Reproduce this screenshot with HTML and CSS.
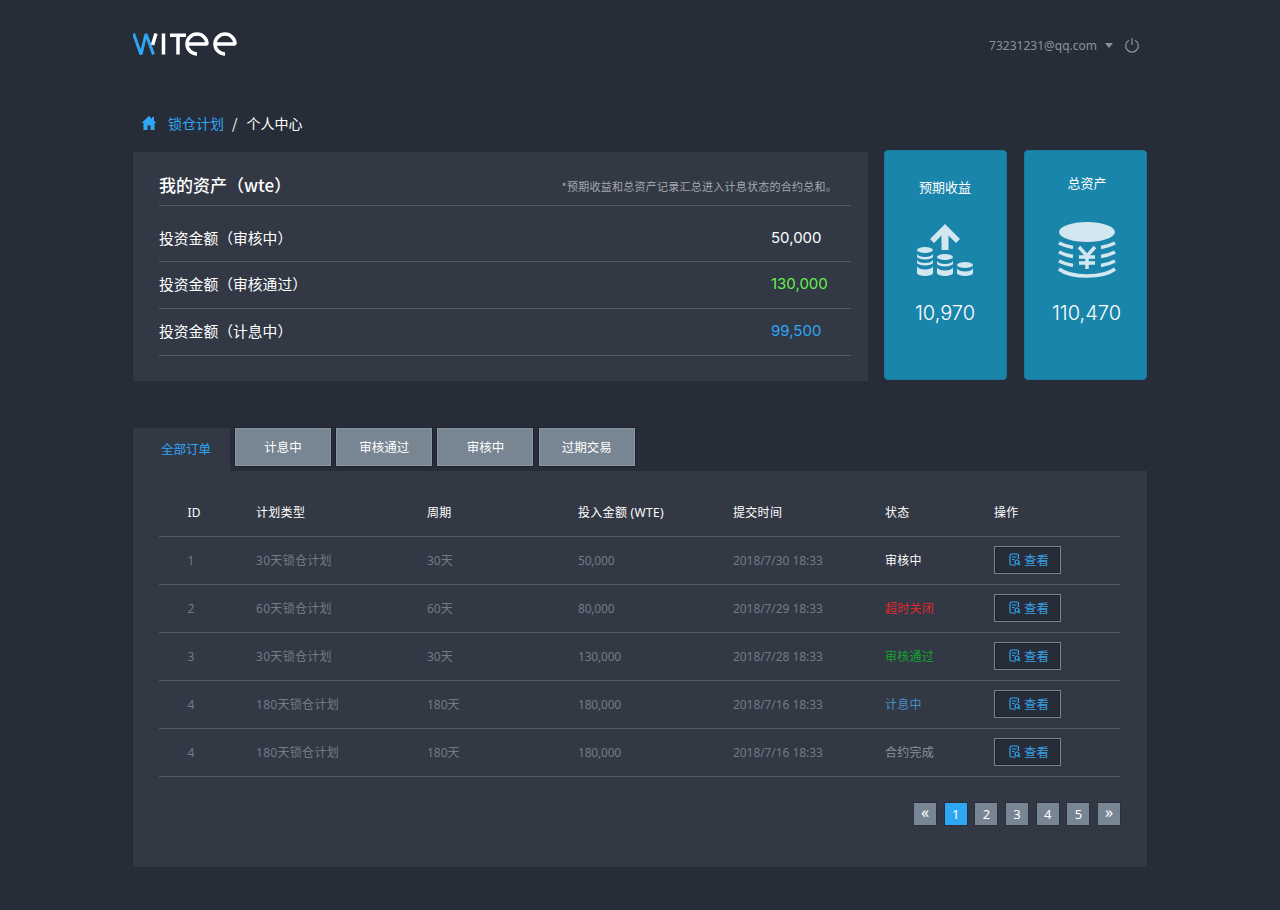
FILE: index.html
```html
<!DOCTYPE html>
<html lang="zh-CN">
<head>
<meta charset="utf-8">
<title>WITee</title>
<link rel="stylesheet" href="styles.css">
</head>
<body>
<div class="page">
  <header class="top">
    <svg class="logo" viewBox="132 30 106 28" aria-label="WITee">
      <path class="logo-blue" d="M133.500 33.500 141 54.500 146 34 153.500 54.500"/>
      <path class="logo-white" d="M156 33.500 152.500 45M163.500 33.500V54.500M170 35.200H186M178 35V54.500M187 44H207A10 10 0 1 0 197 54M215 44H235A10 10 0 1 0 225 54"/>
    </svg>
    <div class="user">
      <span class="email">73231231@qq.com</span>
      <span class="caret"></span>
      <svg class="power" viewBox="0 0 16 16"><path d="M5 3.200A6.300 6.300 0 1 0 11 3.200M8 1V8"/></svg>
    </div>
  </header>

  <nav class="crumb">
    <svg class="home" viewBox="0 0 16 16"><path d="M8 1 0.500 8H2.500V15H6.500V10.500H9.500V15H13.500V8H15.500L13 5.700V2H11V3.900Z"/></svg>
    <a class="crumb-link">锁仓计划</a>
    <span class="crumb-sep">/</span>
    <span class="crumb-now">个人中心</span>
  </nav>

  <section class="summary">
    <div class="assets">
      <div class="assets-head">
        <h2>我的资产（wte）</h2>
        <p>*预期收益和总资产记录汇总进入计息状态的合约总和。</p>
      </div>
      <div class="asset-row"><span>投资金额（审核中）</span><b class="val val-white">50,000</b></div>
      <div class="asset-row"><span>投资金额（审核通过）</span><b class="val val-green">130,000</b></div>
      <div class="asset-row"><span>投资金额（计息中）</span><b class="val val-blue">99,500</b></div>
    </div>

    <div class="card card-income">
      <div class="card-title">预期收益</div>
      <svg class="card-icon" viewBox="916 222 60 58">
        <path class="ic-fill" d="M945 224 960 239 956 243 948.500 235.500V250H941.500V235.500L934 243 930 239Z"/>
        <g class="ic-fill">
          <ellipse cx="925" cy="250" rx="8" ry="3"/>
          <path d="M917 253.500v3a8 3 0 0 0 16 0v-3a8 3.500 0 0 1-16 0ZM917 259.500v3a8 3 0 0 0 16 0v-3a8 3.500 0 0 1-16 0ZM917 266v7a8 3 0 0 0 16 0v-7a8 3.500 0 0 1-16 0Z"/>
          <ellipse cx="945" cy="257" rx="8" ry="3"/>
          <path d="M937 260.500v3a8 3 0 0 0 16 0v-3a8 3.500 0 0 1-16 0ZM937 267v6a8 3 0 0 0 16 0v-6a8 3.500 0 0 1-16 0Z"/>
          <ellipse cx="965" cy="265" rx="8" ry="3"/>
          <path d="M957 268v5a8 3 0 0 0 16 0v-5a8 3.500 0 0 1-16 0Z"/>
        </g>
      </svg>
      <div class="card-num">10,970</div>
    </div>

    <div class="card card-total">
      <div class="card-title">总资产</div>
      <svg class="card-icon" viewBox="1054 220 60 60">
        <ellipse class="ic-fill" cx="1085" cy="232" rx="28" ry="10"/>
        <path class="ic-line" d="M1057 243Q1064 246.500 1071 247.500M1057 252Q1064 255.500 1071 256.500M1057 261Q1064 264.500 1071 265.500M1113 243Q1106 246.500 1099 247.500M1113 252Q1106 255.500 1099 256.500M1113 261Q1106 264.500 1099 265.500M1057 269Q1066 276 1085 276 1104 276 1113 269"/>
        <path class="ic-yen" d="M1077 247 1085 256 1093 247M1085 256V269M1077 257H1093M1077 263H1093"/>
      </svg>
      <div class="card-num">110,470</div>
    </div>
  </section>

  <div class="tabs">
    <a class="tab tab-on">全部订单</a>
    <a class="tab">计息中</a>
    <a class="tab">审核通过</a>
    <a class="tab">审核中</a>
    <a class="tab">过期交易</a>
  </div>

  <section class="orders">
    <table class="grid">
      <colgroup>
        <col class="c1"><col class="c2"><col class="c3"><col class="c4"><col class="c5"><col class="c6"><col class="c7">
      </colgroup>
      <thead>
        <tr><th>ID</th><th>计划类型</th><th>周期</th><th>投入金额 (WTE)</th><th>提交时间</th><th>状态</th><th>操作</th></tr>
      </thead>
      <tbody>
        <tr><td>1</td><td>30天锁仓计划</td><td>30天</td><td>50,000</td><td>2018/7/30 18:33</td><td class="st-white">审核中</td><td><a class="view"><svg class="doc" viewBox="0 0 12 13"><path d="M7 12H2.500Q1 12 1 10.500V2.500Q1 1 2.500 1H8Q9.500 1 9.500 2.500V6M3 4H7.500M3 6.500H5.500"/><circle cx="8" cy="9" r="2"/><path d="M9.500 10.500 11 12"/></svg>查看</a></td></tr>
        <tr><td>2</td><td>60天锁仓计划</td><td>60天</td><td>80,000</td><td>2018/7/29 18:33</td><td class="st-red">超时关闭</td><td><a class="view"><svg class="doc" viewBox="0 0 12 13"><path d="M7 12H2.500Q1 12 1 10.500V2.500Q1 1 2.500 1H8Q9.500 1 9.500 2.500V6M3 4H7.500M3 6.500H5.500"/><circle cx="8" cy="9" r="2"/><path d="M9.500 10.500 11 12"/></svg>查看</a></td></tr>
        <tr><td>3</td><td>30天锁仓计划</td><td>30天</td><td>130,000</td><td>2018/7/28 18:33</td><td class="st-green">审核通过</td><td><a class="view"><svg class="doc" viewBox="0 0 12 13"><path d="M7 12H2.500Q1 12 1 10.500V2.500Q1 1 2.500 1H8Q9.500 1 9.500 2.500V6M3 4H7.500M3 6.500H5.500"/><circle cx="8" cy="9" r="2"/><path d="M9.500 10.500 11 12"/></svg>查看</a></td></tr>
        <tr><td>4</td><td>180天锁仓计划</td><td>180天</td><td>180,000</td><td>2018/7/16 18:33</td><td class="st-blue">计息中</td><td><a class="view"><svg class="doc" viewBox="0 0 12 13"><path d="M7 12H2.500Q1 12 1 10.500V2.500Q1 1 2.500 1H8Q9.500 1 9.500 2.500V6M3 4H7.500M3 6.500H5.500"/><circle cx="8" cy="9" r="2"/><path d="M9.500 10.500 11 12"/></svg>查看</a></td></tr>
        <tr><td>4</td><td>180天锁仓计划</td><td>180天</td><td>180,000</td><td>2018/7/16 18:33</td><td class="st-gray">合约完成</td><td><a class="view"><svg class="doc" viewBox="0 0 12 13"><path d="M7 12H2.500Q1 12 1 10.500V2.500Q1 1 2.500 1H8Q9.500 1 9.500 2.500V6M3 4H7.500M3 6.500H5.500"/><circle cx="8" cy="9" r="2"/><path d="M9.500 10.500 11 12"/></svg>查看</a></td></tr>
      </tbody>
    </table>
    <div class="pager">
      <a class="pg pg-arrow">«</a>
      <a class="pg pg-on">1</a>
      <a class="pg">2</a>
      <a class="pg">3</a>
      <a class="pg">4</a>
      <a class="pg">5</a>
      <a class="pg pg-arrow">»</a>
    </div>
  </section>
</div>
</body>
</html>
```

FILE: styles.css
```css
* { box-sizing: border-box; }
html, body { margin: 0; padding: 0; }
body {
  background: #272d38;
  color: #fff;
  font-family: "Noto Sans", "Noto Sans CJK SC", sans-serif;
  font-size: 12px;
}
.page { width: 1014px; height: 910px; margin: 0 auto; overflow: hidden; }

/* header */
.top { height: 111px; display: flex; justify-content: space-between; align-items: flex-start; padding: 30px 7px 0 0; }
.logo { width: 106px; height: 28px; margin-left: -1px; display: block; }
.logo-blue, .logo-white { fill: none; stroke-linejoin: bevel; }
.logo-blue { stroke: #2ea7f5; stroke-width: 3; }
.logo-white { stroke: #fff; stroke-width: 3.500; }
.user { display: flex; align-items: center; height: 30px; color: #8b919c; font-size: 12px; }
.email { margin-right: 8px; }
.caret { width: 0; height: 0; border-left: 4.500px solid transparent; border-right: 4.500px solid transparent; border-top: 5px solid #8b919c; margin-right: 11px; }
.power { width: 16px; height: 16px; fill: none; stroke: #8b919c; stroke-width: 1.200; }

/* breadcrumb */
.crumb { height: 24px; display: flex; align-items: center; padding-left: 8px; font-size: 14px; font-family: "Noto Sans CJK SC", sans-serif; }
.home { width: 16px; height: 16px; fill: #2ea7f5; margin-right: 11px; }
.crumb-link { color: #2ea7f5; }
.crumb-sep { margin: 0 9px 0 8px; }

/* summary */
.summary { display: flex; align-items: flex-start; margin-top: 15px; }
.assets { width: 735px; height: 229px; margin-top: 2px; margin-right: 16px; background: #323844; padding: 0 17px 0 26px; }
.assets-head { height: 54px; display: flex; justify-content: space-between; align-items: center; padding: 12px 14px 0 0; border-bottom: 1px solid #535a66; }
.assets-head h2 { margin: 0; font-size: 17px; font-weight: 500; font-family: "Noto Sans CJK SC", sans-serif; }
.assets-head p { margin: 2px 0 0; font-size: 11px; letter-spacing: 0.250px; color: #a3a8b0; font-family: "Noto Sans CJK SC", sans-serif; }
.asset-row { height: 47px; padding-bottom: 4px; display: flex; justify-content: space-between; align-items: center; border-bottom: 1px solid #535a66; font-size: 14.800px; font-family: "Noto Sans CJK SC", sans-serif; }
.asset-row:nth-child(2) { height: 56px; padding: 8px 0 0; }
.val { width: 80px; font-family: Inter, sans-serif; font-size: 15px; font-weight: 400; }
.val-white { color: #fff; }
.val-green { color: #66ee4e; }
.val-blue { color: #2ea7f5; }

.card { width: 123px; height: 230px; background: #1a85ab; border: 1px solid #1b7a9c; border-radius: 4px; display: flex; flex-direction: column; align-items: center; }
.card-income { margin-right: 17px; }
.card-title { font-size: 13px; font-family: "Noto Sans CJK SC", sans-serif; line-height: 20px; }
.card-income .card-title { margin-top: 26px; margin-right: 1px; }
.card-total .card-title { margin-top: 22px; margin-left: 3px; }
.card-icon { display: block; width: 60px; }
.card-income .card-icon { height: 58px; margin-top: 25px; }
.card-total .card-icon { height: 60px; margin-top: 27px; }
.ic-fill { fill: #d2e7ef; }
.ic-line { fill: none; stroke: #d2e7ef; stroke-width: 3.500; }
.ic-yen { fill: none; stroke: #d2e7ef; stroke-width: 3.500; }
.card-num { font-family: Inter, sans-serif; font-size: 20px; font-weight: 300; line-height: 24px; }
.card-income .card-num { margin-top: 21px; margin-right: 1px; }
.card-total .card-num { margin-top: 21px; margin-left: 2px; }

/* tabs */
.tabs { display: flex; margin-top: 47px; align-items: flex-start; gap: 5.250px; }
.tab { width: 96px; height: 38px; display: flex; align-items: center; justify-content: center; padding-bottom: 2px; background: #788592; border: 1px solid #8a96a2; box-shadow: 0 0 0 1px #1e232c; font-family: "Noto Sans CJK SC", sans-serif; font-size: 12.500px; color: #fff; }
.tab-on { width: 97px; height: 43px; padding-left: 9px; background: #323844; border: 0; box-shadow: none; color: #2ea7f5; margin-right: -0.330px; }

/* orders */
.orders { height: 396px; background: #323844; padding: 18px 27px 0 26px; }
.grid { width: 961px; table-layout: fixed; border-collapse: collapse; }
.c1 { width: 97px; } .c2 { width: 171px; } .c3 { width: 151px; } .c4 { width: 155px; } .c5 { width: 152px; } .c6 { width: 109px; } .c7 { width: 126px; }
.grid th { height: 47px; padding: 0; text-align: left; font-weight: 400; color: #fff; font-size: 12px; letter-spacing: 0.300px; border-bottom: 1px solid #535a66; }
.grid td { height: 48px; padding: 0; color: #737b88; font-size: 12px; border-bottom: 1px solid #535a66; }
.grid th:first-child, .grid td:first-child { padding-left: 28.500px; }
.grid td:nth-child(2) { letter-spacing: 0.300px; }
.grid td:nth-child(4) { letter-spacing: -0.200px; }
.grid td:nth-child(5) { letter-spacing: -0.070px; }
.grid td:nth-child(6) { letter-spacing: 0.250px; }
.grid td.st-white { color: #fff; }
.grid td.st-red { color: #e0282e; }
.grid td.st-green { color: #12a52c; }
.grid td.st-blue { color: #4a8fc4; }
.grid td.st-gray { color: #8b919c; }
.view { width: 67px; height: 28px; display: flex; align-items: center; justify-content: center; padding: 0 0 2px 3px; background: #272d38; border: 1px solid #7a8491; box-shadow: inset 0 0 0 1px #1e232c; color: #3a9ee0; font-size: 12.500px; }
.doc { width: 12px; height: 13px; margin-right: 3px; fill: none; stroke: #2ea7f5; stroke-width: 1.200; }

/* pager */
.pager { display: flex; justify-content: flex-end; gap: 8.670px; margin-top: 26px; }
.pg { width: 22px; height: 22px; display: flex; align-items: center; justify-content: center; background: #788592; box-shadow: 0 0 0 1px #2a2f3a; color: #fff; font-size: 13px; }
.pg-on { background: #2ea7f5; }
.pg-arrow { font-size: 16px; padding-bottom: 3px; }
```
